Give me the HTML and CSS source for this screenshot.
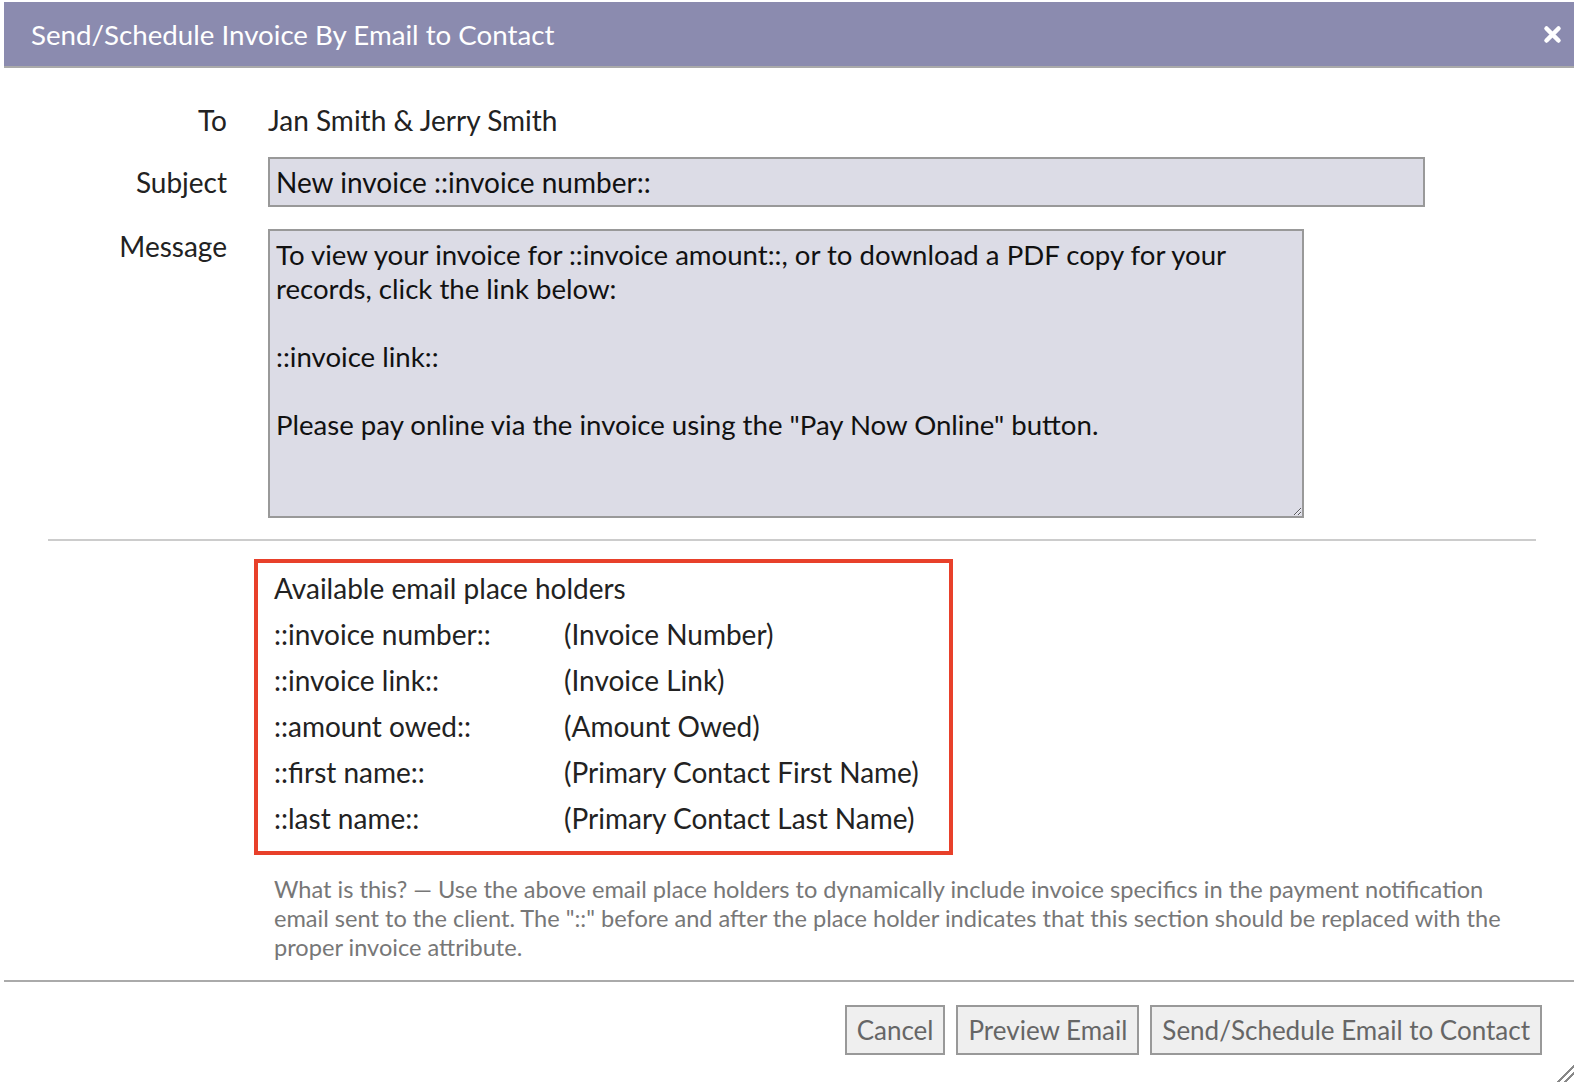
FILE: index.html
```html
<!DOCTYPE html>
<html lang="en">
<head>
    <meta charset="UTF-8">
    <meta name="viewport" content="width=device-width, initial-scale=1.0">
    <title>Send/Schedule Invoice</title>
    <link rel="stylesheet" href="styles.css">
</head>
<body>
    <div class="dialogo">
        <div class="titulo">
            <span>Send/Schedule Invoice By Email to Contact</span>
            <span class="cerrar">
                <svg width="19" height="19" viewBox="0 0 19 19"><path d="M3.5 3.5 L15.5 15.5 M15.5 3.5 L3.5 15.5" stroke="#fff" stroke-width="4.5" stroke-linecap="round"/></svg>
            </span>
        </div>
        <div class="cuerpo">
            <div class="fila fila-to">
                <label>To</label>
                <div>Jan Smith &amp; Jerry Smith</div>
            </div>
            <div class="fila fila-subject">
                <label for="asunto">Subject</label>
                <input type="text" id="asunto" class="asunto" value="New invoice ::invoice number::">
            </div>
            <div class="fila fila-mensaje">
                <label for="mensaje">Message</label>
                <textarea id="mensaje" class="mensaje">To view your invoice for ::invoice amount::, or to download a PDF copy for your records, click the link below:

::invoice link::

Please pay online via the invoice using the "Pay Now Online" button.</textarea>
            </div>
            <hr class="separador">
            <div class="marcadores">
                <div class="marcadores-titulo">Available email place holders</div>
                <div class="marcador"><span>::invoice number::</span><span>(Invoice Number)</span></div>
                <div class="marcador"><span>::invoice link::</span><span>(Invoice Link)</span></div>
                <div class="marcador"><span>::amount owed::</span><span>(Amount Owed)</span></div>
                <div class="marcador"><span>::first name::</span><span>(Primary Contact First Name)</span></div>
                <div class="marcador"><span>::last name::</span><span>(Primary Contact Last Name)</span></div>
            </div>
            <p class="ayuda">What is this? — Use the above email place holders to dynamically include invoice specifics in the payment notification email sent to the client. The "::" before and after the place holder indicates that this section should be replaced with the proper invoice attribute.</p>
        </div>
        <div class="pie">
            <button class="boton">Cancel</button>
            <button class="boton">Preview Email</button>
            <button class="boton">Send/Schedule Email to Contact</button>
        </div>
        <span class="agarre"></span>
    </div>
</body>
</html>
```

FILE: styles.css
```css
body{
    margin: 0;
    background: #fff;
    font-family: Lato, "Open Sans", sans-serif;
    color: #222;
}
.dialogo{
    position: relative;
    margin: 2px 0 0 4px;
    height: 1084px;
}
.titulo{
    height: 64px;
    background-color: #8b8baf;
    border-bottom: 2px solid #aaa;
    color: #fff;
    font-size: 27.7px;
    display: flex;
    align-items: center;
    justify-content: space-between;
    padding: 0 12px 0 27px;
}
.cerrar{
    display: flex;
    margin-top: 1px;
}
.cuerpo{
    padding-top: 35px;
}
.fila{
    display: grid;
    grid-template-columns: 223px 1fr;
    column-gap: 41px;
    font-size: 28px;
    line-height: 34px;
}
.fila label{
    text-align: right;
}
.fila-subject{
    margin-top: 20px;
    align-items: center;
}
.fila-mensaje{
    margin-top: 22px;
}
.asunto, .mensaje{
    font-family: Lato, "Open Sans", sans-serif;
    font-size: 28px;
    color: #111;
    background: #dcdce6;
    border: 2px solid #999;
    box-sizing: border-box;
    margin: 0;
    padding: 0 6px;
}
.asunto{
    width: 1157px;
    height: 50px;
}
.mensaje{
    display: block;
    font-size: 27.6px;
    width: 1036px;
    height: 289px;
    line-height: 34px;
    padding-top: 7px;
    resize: both;
}
.separador{
    border: none;
    border-top: 2px solid #ccc;
    margin: 21px 38px 18px 44px;
}
.marcadores{
    width: 699px;
    box-sizing: border-box;
    margin-left: 250px;
    border: 4px solid #e8402a;
    padding: 2px 16px 10px 16px;
    font-size: 28px;
    line-height: 46px;
}
.marcador{
    display: grid;
    grid-template-columns: 290px 1fr;
}
.ayuda{
    margin: 20px 44px 0 270px;
    color: #777;
    font-size: 23.6px;
    line-height: 29px;
}
.pie{
    border-top: 2px solid #aaa;
    margin-top: 18px;
    padding: 23px 32px 0 0;
    display: flex;
    justify-content: flex-end;
    gap: 11px;
}
.boton{
    font-family: Lato, "Open Sans", sans-serif;
    font-size: 26px;
    color: #666;
    background: #efefef;
    border: 2px solid #999;
    height: 50px;
    padding: 0 10px;
    border-radius: 0;
}
.agarre{
    position: absolute;
    right: 0;
    top: 1058px;
    width: 22px;
    height: 22px;
    background: linear-gradient(135deg, transparent 60%, #888 60%, #888 66%, transparent 66%, transparent 76%, #888 76%, #888 82%, transparent 82%);
}
```
